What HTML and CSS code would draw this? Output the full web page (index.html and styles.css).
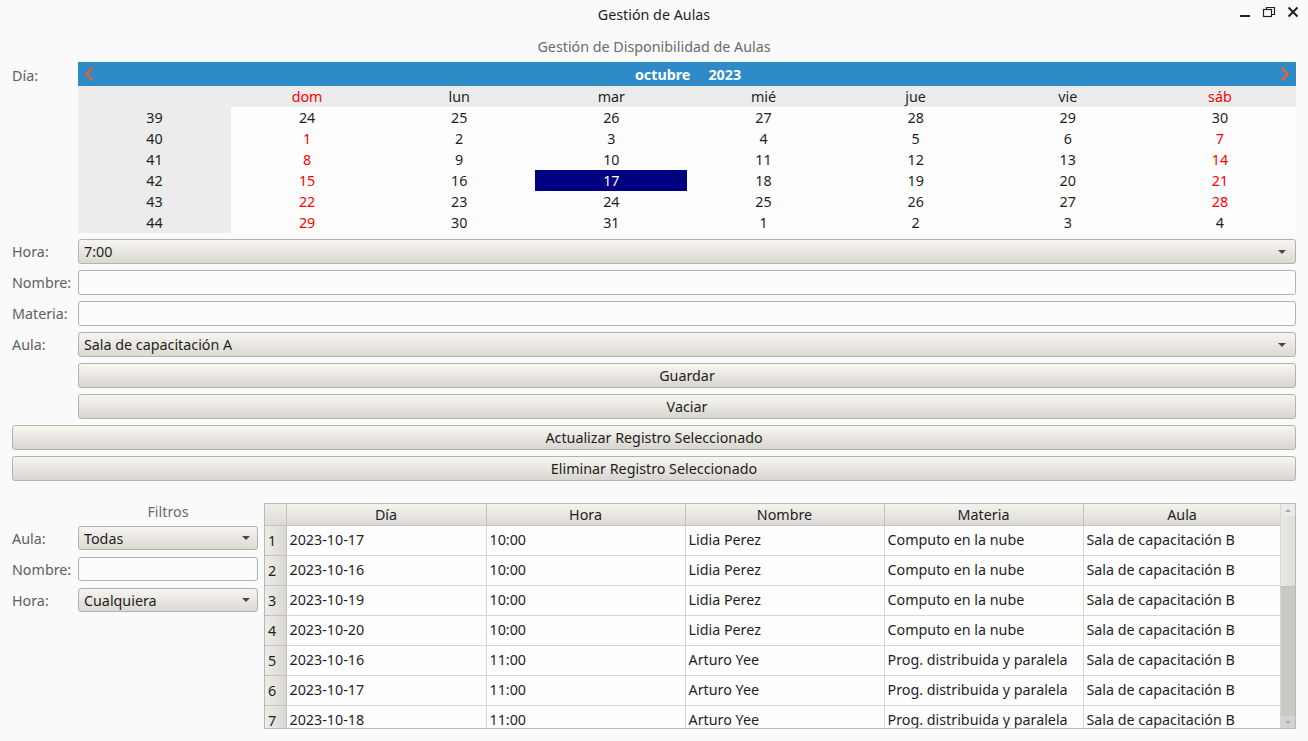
FILE: index.html
```html
<!DOCTYPE html>
<html lang="es">
<head>
<meta charset="utf-8">
<title>Gestión de Aulas</title>
<link rel="stylesheet" href="styles.css">
</head>
<body>
<div class="window">
  <header class="titlebar">
    <span class="title">Gestión de Aulas</span>
    <div class="controls">
      <svg class="ctl" width="14" height="14" viewBox="0 0 14 14"><rect x="2" y="10" width="10" height="2" fill="#222"/></svg>
      <svg class="ctl" width="14" height="14" viewBox="0 0 14 14"><rect x="1.5" y="4.5" width="8" height="7" fill="none" stroke="#222" stroke-width="1.2"/><path d="M4.5 4.5V2.5h8v7h-3" fill="none" stroke="#222" stroke-width="1.2"/></svg>
      <svg class="ctl" width="14" height="14" viewBox="0 0 14 14"><path d="M2.5 2.5l9 9M11.5 2.5l-9 9" stroke="#222" stroke-width="2"/></svg>
    </div>
  </header>

  <div class="subtitle">Gestión de Disponibilidad de Aulas</div>

  <div class="form">
    <label class="lbl lbl-top">Día:</label>
    <div class="calendar">
      <div class="cal-nav">
        <svg class="nav-arrow" width="12" height="16" viewBox="0 0 12 16"><path d="M8.5 2.5L3.5 8l5 5.5" fill="none" stroke="#e7632b" stroke-width="2.6" stroke-linecap="round" stroke-linejoin="round"/></svg>
        <div class="cal-title"><span class="month">octubre<span class="mdrop"></span></span><span class="year">2023</span></div>
        <svg class="nav-arrow" width="12" height="16" viewBox="0 0 12 16"><path d="M3.5 2.5L8.5 8l-5 5.5" fill="none" stroke="#e7632b" stroke-width="2.6" stroke-linecap="round" stroke-linejoin="round"/></svg>
      </div>
      <div class="cal-grid">
        <div class="hd"></div><div class="hd red">dom</div><div class="hd">lun</div><div class="hd">mar</div><div class="hd">mié</div><div class="hd">jue</div><div class="hd">vie</div><div class="hd red">sáb</div>

        <div class="wk">39</div><div class="d">24</div><div class="d">25</div><div class="d">26</div><div class="d">27</div><div class="d">28</div><div class="d">29</div><div class="d">30</div>
        <div class="wk">40</div><div class="d red">1</div><div class="d">2</div><div class="d">3</div><div class="d">4</div><div class="d">5</div><div class="d">6</div><div class="d red">7</div>
        <div class="wk">41</div><div class="d red">8</div><div class="d">9</div><div class="d">10</div><div class="d">11</div><div class="d">12</div><div class="d">13</div><div class="d red">14</div>
        <div class="wk">42</div><div class="d red">15</div><div class="d">16</div><div class="d sel">17</div><div class="d">18</div><div class="d">19</div><div class="d">20</div><div class="d red">21</div>
        <div class="wk">43</div><div class="d red">22</div><div class="d">23</div><div class="d">24</div><div class="d">25</div><div class="d">26</div><div class="d">27</div><div class="d red">28</div>
        <div class="wk">44</div><div class="d red">29</div><div class="d">30</div><div class="d">31</div><div class="d">1</div><div class="d">2</div><div class="d">3</div><div class="d">4</div>
      </div>
    </div>

    <label class="lbl">Hora:</label>
    <div class="combo"><span>7:00</span><span class="caret"></span></div>

    <label class="lbl">Nombre:</label>
    <div class="input"></div>

    <label class="lbl">Materia:</label>
    <div class="input"></div>

    <label class="lbl">Aula:</label>
    <div class="combo"><span>Sala de capacitación A</span><span class="caret"></span></div>

    <div></div>
    <button class="btn">Guardar</button>

    <div></div>
    <button class="btn">Vaciar</button>

    <button class="btn wide">Actualizar Registro Seleccionado</button>
    <button class="btn wide">Eliminar Registro Seleccionado</button>
  </div>

  <div class="bottom">
    <div class="filters">
      <div class="filters-title">Filtros</div>
      <div class="filter-grid">
        <label class="lbl">Aula:</label>
        <div class="combo small"><span>Todas</span><span class="caret"></span></div>
        <label class="lbl">Nombre:</label>
        <div class="input small"></div>
        <label class="lbl">Hora:</label>
        <div class="combo small"><span>Cualquiera</span><span class="caret"></span></div>
      </div>
    </div>

    <div class="table-wrap">
      <div class="table-view">
        <table class="grid">
          <colgroup>
            <col class="c-num"><col class="c-dia"><col class="c-hora"><col class="c-nom"><col class="c-mat"><col class="c-aula">
          </colgroup>
          <thead>
            <tr><th class="corner"></th><th>Día</th><th>Hora</th><th>Nombre</th><th>Materia</th><th>Aula</th></tr>
          </thead>
          <tbody>
            <tr><th class="rn">1</th><td>2023-10-17</td><td>10:00</td><td>Lidia Perez</td><td>Computo en la nube</td><td>Sala de capacitación B</td></tr>
            <tr><th class="rn">2</th><td>2023-10-16</td><td>10:00</td><td>Lidia Perez</td><td>Computo en la nube</td><td>Sala de capacitación B</td></tr>
            <tr><th class="rn">3</th><td>2023-10-19</td><td>10:00</td><td>Lidia Perez</td><td>Computo en la nube</td><td>Sala de capacitación B</td></tr>
            <tr><th class="rn">4</th><td>2023-10-20</td><td>10:00</td><td>Lidia Perez</td><td>Computo en la nube</td><td>Sala de capacitación B</td></tr>
            <tr><th class="rn">5</th><td>2023-10-16</td><td>11:00</td><td>Arturo Yee</td><td>Prog. distribuida y paralela</td><td>Sala de capacitación B</td></tr>
            <tr><th class="rn">6</th><td>2023-10-17</td><td>11:00</td><td>Arturo Yee</td><td>Prog. distribuida y paralela</td><td>Sala de capacitación B</td></tr>
            <tr><th class="rn">7</th><td>2023-10-18</td><td>11:00</td><td>Arturo Yee</td><td>Prog. distribuida y paralela</td><td>Sala de capacitación B</td></tr>
          </tbody>
        </table>
      </div>
      <div class="vscroll">
        <div class="sb-arrow up"></div>
        <div class="sb-track"><div class="sb-handle"></div></div>
        <div class="sb-arrow down"></div>
      </div>
    </div>
  </div>
</div>
</body>
</html>
```

FILE: styles.css
```css
* { box-sizing: border-box; }

html, body {
  margin: 0;
  padding: 0;
  background: #fafafa;
}

body {
  font-family: "Noto Sans", "Open Sans", sans-serif;
  font-size: 14.3px;
  color: #2b2b2b;
  width: 1308px;
  height: 741px;
  overflow: hidden;
}

.window { display: flex; flex-direction: column; }

.titlebar {
  height: 31px;
  display: flex;
  align-items: center;
  justify-content: center;
  position: relative;
}
.title { color: #1e1e1e; margin-top: -3px; }
.controls {
  position: absolute;
  right: 8px;
  top: 5px;
  display: flex;
  gap: 10px;
}

.subtitle {
  text-align: center;
  color: #6b6b6b;
  height: 31px;
  line-height: 32px;
}

.form {
  display: grid;
  grid-template-columns: 66px 1fr;
  row-gap: 6px;
  padding: 0 12px;
}

.lbl {
  color: #606060;
  display: flex;
  align-items: center;
  white-space: nowrap;
}
.lbl-top { align-items: flex-start; padding-top: 4px; }

/* calendar */
.calendar { display: flex; flex-direction: column; }
.cal-nav {
  height: 24px;
  background: #2e8bc8;
  display: flex;
  align-items: center;
  justify-content: space-between;
  padding: 0 5px 0 5px;
}
.cal-title {
  color: #ffffff;
  font-weight: bold;
  display: flex;
  gap: 18px;
  margin-left: 2px;
}
.month { position: relative; }
.mdrop {
  position: absolute;
  right: -8px;
  bottom: 1px;
  width: 0; height: 0;
  border-left: 3px solid transparent;
  border-right: 3px solid transparent;
  border-top: 3px solid #5a7c96;
}
.cal-grid {
  display: grid;
  grid-template-columns: 153px repeat(7, 1fr);
  grid-auto-rows: 21px;
}
.cal-grid > div {
  display: flex;
  align-items: center;
  justify-content: center;
  color: #1f1f1f;
}
.cal-grid .hd { background: #ececec; }
.cal-grid .wk { background: #ececec; }
.cal-grid .d { background: #fdfdfd; }
.cal-grid .red { color: #ff0000; }
.cal-grid .sel { background: #000080; color: #ffffff; }

/* fields */
.combo, .input, .btn {
  height: 25px;
  border: 1px solid #b2b2b2;
  border-radius: 3px;
}
.combo {
  background: linear-gradient(#f7f5f0, #dcd9d3);
  display: flex;
  align-items: center;
  justify-content: space-between;
  padding: 0 9px 0 5px;
  color: #1e1e1e;
}
.caret {
  width: 0; height: 0;
  border-left: 4px solid transparent;
  border-right: 4px solid transparent;
  border-top: 4px solid #4a4a4a;
}
.input { background: #fcfcfc; }

.btn {
  font-family: inherit;
  font-size: inherit;
  color: #1e1e1e;
  background: linear-gradient(#f8f6f1, #d9d6d0);
  padding: 0;
  margin: 0;
}
.btn.wide { grid-column: 1 / -1; }

/* bottom */
.bottom {
  display: flex;
  gap: 6px;
  padding: 22px 12px 0 12px;
}
.filters { width: 246px; display: flex; flex-direction: column; }
.filters-title {
  text-align: center;
  color: #6b6b6b;
  height: 23px;
  line-height: 17px;
  padding-left: 66px;
}
.filter-grid {
  display: grid;
  grid-template-columns: 66px 1fr;
  row-gap: 7px;
}
.combo.small, .input.small { height: 24px; }
.combo.small { padding-right: 7px; }

.table-wrap {
  width: 1032px;
  height: 226px;
  border: 1px solid #b8b8b8;
  display: flex;
  overflow: hidden;
  background: #fefefe;
}
.table-view { flex: 1; overflow: hidden; }
.grid {
  border-collapse: collapse;
  table-layout: fixed;
  width: 1016px;
}
.c-num { width: 21px; }
.c-dia { width: 200px; }
.c-hora { width: 199px; }
.c-nom { width: 199px; }
.c-mat { width: 199px; }
.c-aula { width: 198px; }

.grid thead th {
  height: 21px;
  font-weight: normal;
  color: #1e1e1e;
  background: linear-gradient(#f4f2ee, #dedbd6);
  border-right: 1px solid #c4c2be;
  border-bottom: 1px solid #c4c2be;
  padding: 0;
  text-align: center;
}
.grid thead th.corner { background: linear-gradient(#efede9, #dedbd6); }
.grid tbody td {
  height: 30px;
  padding: 0 3px 2px 3px;
  border-right: 1px solid #d6d6d6;
  border-bottom: 1px solid #d6d6d6;
  color: #1e1e1e;
  white-space: nowrap;
  overflow: hidden;
}
.grid tbody th.rn {
  background: linear-gradient(90deg, #eeece8, #dad7d2);
  font-weight: normal;
  color: #1e1e1e;
  text-align: left;
  padding: 0 0 0 3px;
  border-right: 1px solid #c4c2be;
  border-bottom: 1px solid #c4c2be;
}

.vscroll {
  width: 15px;
  display: flex;
  flex-direction: column;
  background: #cbc9c5;
  border-left: 1px solid #d6d6d6;
}
.sb-arrow {
  height: 12px;
  background: #eceae6;
  display: flex;
  align-items: center;
  justify-content: center;
}
.sb-arrow.up::after {
  content: "";
  border-left: 3px solid transparent;
  border-right: 3px solid transparent;
  border-bottom: 3px solid #a8a6a2;
}
.sb-arrow.down { background: #d6d4d0; }
.sb-arrow.down::after {
  content: "";
  border-left: 3px solid transparent;
  border-right: 3px solid transparent;
  border-top: 3px solid #a8a6a2;
}
.sb-track { flex: 1; display: flex; flex-direction: column; }
.sb-handle {
  height: 71px;
  background: linear-gradient(90deg, #ebe9e5, #dedcd8);
  border-bottom: 1px solid #c0beba;
}
```
